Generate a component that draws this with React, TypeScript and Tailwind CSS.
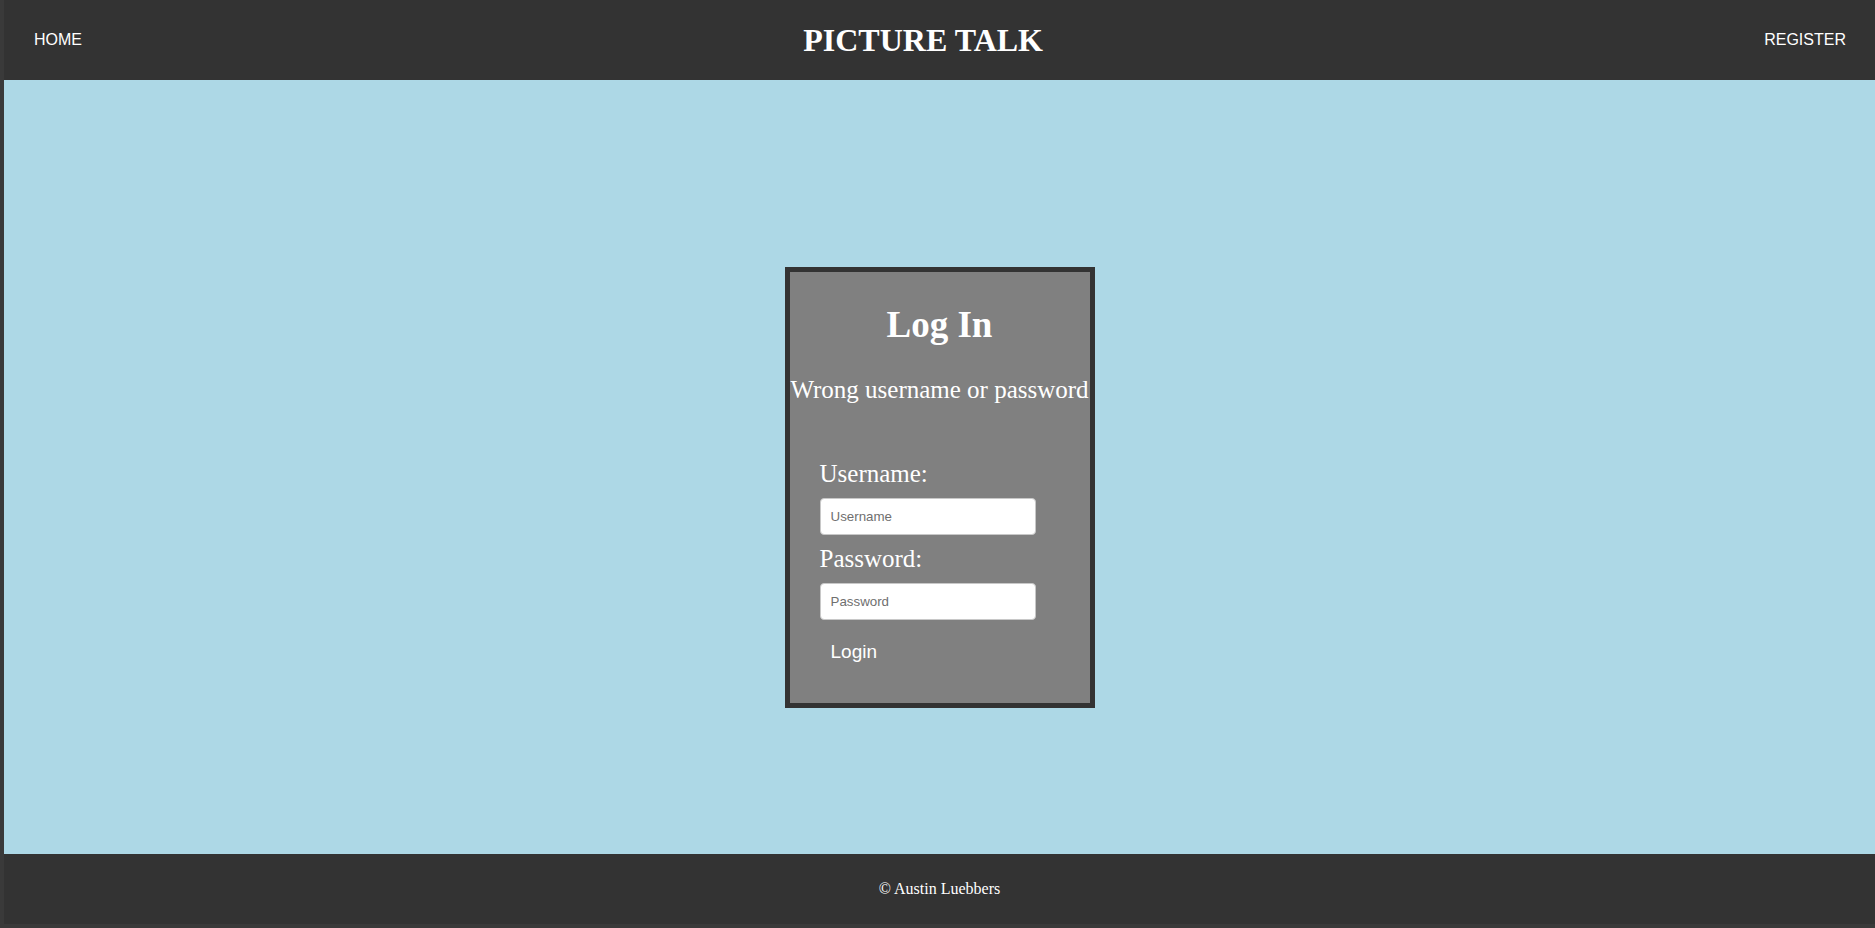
import * as React from "react";

const serif = { fontFamily: '"Liberation Serif", "Times New Roman", serif' };

export default function App() {
	const [username, setUsername] = React.useState("");
	const [password, setPassword] = React.useState("");

	return (
		<div className="h-[928px] flex flex-col bg-[#333333] border-l-4 border-b-4 border-[#3a3a3a] font-['Liberation_Sans',Arial,sans-serif]">
			<header className="h-[80px] shrink-0 flex items-center justify-between pl-[30px] pr-[29px] text-white">
				<a href="#" className="text-[16px] leading-none">HOME</a>
				<h1 className="text-[32px] font-bold leading-none" style={serif}>PICTURE TALK</h1>
				<a href="#" className="text-[16px] leading-none">REGISTER</a>
			</header>

			<main className="flex-1 bg-[#add8e6] flex justify-center items-start pt-[187px]">
				<div className="w-[310px] border-[5px] border-[#333333] bg-[#808080] text-white" style={serif}>
					<h2 className="mt-[34px] text-center text-[37px] font-bold leading-none">Log In</h2>
					<p className="mt-[34px] text-center text-[25px] leading-none whitespace-nowrap -mx-[2px]">Wrong username or password</p>
					<form className="mt-[59px] pl-[30px] pb-[42px] flex flex-col items-start" onSubmit={(e) => e.preventDefault()}>
						<label className="text-[25px] leading-none">Username:</label>
						<input
							value={username}
							onChange={(e) => setUsername(e.target.value)}
							placeholder="Username"
							className="mt-[12px] w-[216px] h-[37px] rounded-[4px] border border-[#c8c8c8] bg-white px-[10px] text-[13.33px] text-black placeholder:text-[#6f6f6f] font-['Liberation_Sans',Arial,sans-serif] outline-none"
						/>
						<label className="mt-[11px] text-[25px] leading-none">Password:</label>
						<input
							type="password"
							value={password}
							onChange={(e) => setPassword(e.target.value)}
							placeholder="Password"
							className="mt-[12px] w-[216px] h-[37px] rounded-[4px] border border-[#c8c8c8] bg-white px-[10px] text-[13.33px] text-black placeholder:text-[#6f6f6f] font-['Liberation_Sans',Arial,sans-serif] outline-none"
						/>
						<button type="submit" className="mt-[22px] pl-[11px] text-[19px] leading-none text-white bg-transparent font-['Liberation_Sans',Arial,sans-serif]">
							Login
						</button>
					</form>
				</div>
			</main>

			<footer className="h-[70px] shrink-0 flex items-center justify-center text-white">
				<p className="text-[16px] leading-none" style={serif}>© Austin Luebbers</p>
			</footer>
		</div>
	);
}
